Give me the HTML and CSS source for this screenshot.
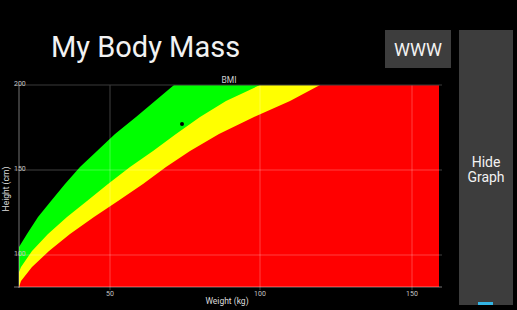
FILE: index.html
```html
<!DOCTYPE html>
<html lang="en">
<head>
    <meta charset="UTF-8">
    <meta name="viewport" content="width=device-width, initial-scale=1.0">
    <title>My Body Mass</title>
    <link rel="stylesheet" href="styles.css">
</head>
<body>
    <div class="app">
        <div class="main">
            <div class="header">
                <h1 class="title">My Body Mass</h1>
                <button class="btn www-button">WWW</button>
            </div>

            <!-- viewBox uses page coordinates so the plot reads like the screen -->
            <svg class="chart" width="450" height="238" viewBox="0 72 450 238">
                <text class="chart-title" x="229" y="83" text-anchor="middle">BMI</text>

                <!-- obese -->
                <rect x="19" y="85" width="420" height="202" fill="#ff0000"/>
                <!-- overweight -->
                <polygon fill="#ffff00" points="19,85 320,85 290,101 254,117 219,134 190,151 166,167 143,184 118,201 94,217 70,234 49,251 32,267 21,281 19,287"/>
                <!-- normal -->
                <polygon fill="#00ff00" points="19,85 260,85 226,101 200,117 176,134 153,151 130,167 108,184 87,201 67,217 48,234 32,251 21,267 19,272"/>
                <!-- underweight -->
                <polygon fill="#000000" points="19,85 174,85 155,101 136,117 115,134 97,151 80,167 65,184 51,201 38,217 27,234 19,247"/>

                <g class="grid">
                    <line x1="14" y1="170" x2="442" y2="170"/>
                    <line x1="14" y1="255" x2="442" y2="255"/>
                    <line x1="110" y1="85" x2="110" y2="290"/>
                    <line x1="260" y1="85" x2="260" y2="290"/>
                    <line x1="412" y1="85" x2="412" y2="290"/>
                </g>
                <line class="grid-top" x1="14" y1="85" x2="442" y2="85"/>
                <g class="axis">
                    <line x1="19" y1="85" x2="19" y2="288"/>
                    <line x1="14" y1="287" x2="442" y2="287"/>
                </g>

                <circle cx="182" cy="124" r="2" fill="#000"/>

                <text class="tick" x="14" y="86">200</text>
                <text class="tick" x="14" y="171">150</text>
                <text class="tick" x="14" y="256">100</text>
                <text class="tick" x="110" y="296" text-anchor="middle">50</text>
                <text class="tick" x="260" y="296" text-anchor="middle">100</text>
                <text class="tick" x="412" y="296" text-anchor="middle">150</text>

                <text class="axis-title" x="227" y="304" text-anchor="middle">Weight (kg)</text>
                <text class="axis-title" x="9" y="189" text-anchor="middle" transform="rotate(-90 9 189)">Height (cm)</text>
            </svg>
        </div>

        <button class="btn hide-button">Hide<br>Graph<span class="pressed-bar"></span></button>
    </div>
</body>
</html>
```

FILE: styles.css
```css
html, body {
    margin: 0;
    padding: 0;
    background: #000;
}

body {
    width: 517px;
    height: 310px;
    overflow: hidden;
    font-family: Roboto, "Noto Sans", sans-serif;
    color: #fff;
}

.app {
    display: flex;
    align-items: flex-start;
    gap: 8px;
}

.main {
    width: 451px;
    display: flex;
    flex-direction: column;
}

.header {
    height: 72px;
    box-sizing: border-box;
    padding-top: 30px;
    display: flex;
    align-items: flex-start;
}

.title {
    margin: 0 0 0 51px;
    font-size: 29px;
    line-height: 34px;
    font-weight: 400;
    color: #f2f2f2;
}

.btn {
    border: none;
    padding: 0;
    background: #3d3d3d;
    color: #f2f2f2;
    font-family: Roboto, "Noto Sans", sans-serif;
}

.www-button {
    margin-left: auto;
    width: 66px;
    height: 38px;
    font-size: 18px;
}

.chart {
    display: block;
}

.chart-title {
    font-size: 8.5px;
    fill: #cfcfcf;
}

.tick {
    font-size: 7px;
    fill: #c4c4c4;
}

.axis-title {
    font-size: 8.5px;
    fill: #dcdcdc;
}

.grid line {
    stroke: rgba(255, 255, 255, 0.25);
    stroke-width: 1;
}

.grid-top {
    stroke: #3a3a3a;
    stroke-width: 1;
}

.axis line {
    stroke: rgba(255, 255, 255, 0.45);
    stroke-width: 1;
}

.hide-button {
    position: relative;
    margin-top: 30px;
    width: 54px;
    height: 275px;
    padding-top: 4px;
    font-size: 14px;
    line-height: 14.5px;
}

.pressed-bar {
    position: absolute;
    left: 19px;
    bottom: 0;
    width: 15px;
    height: 3px;
    background: #33b5e5;
}
```
